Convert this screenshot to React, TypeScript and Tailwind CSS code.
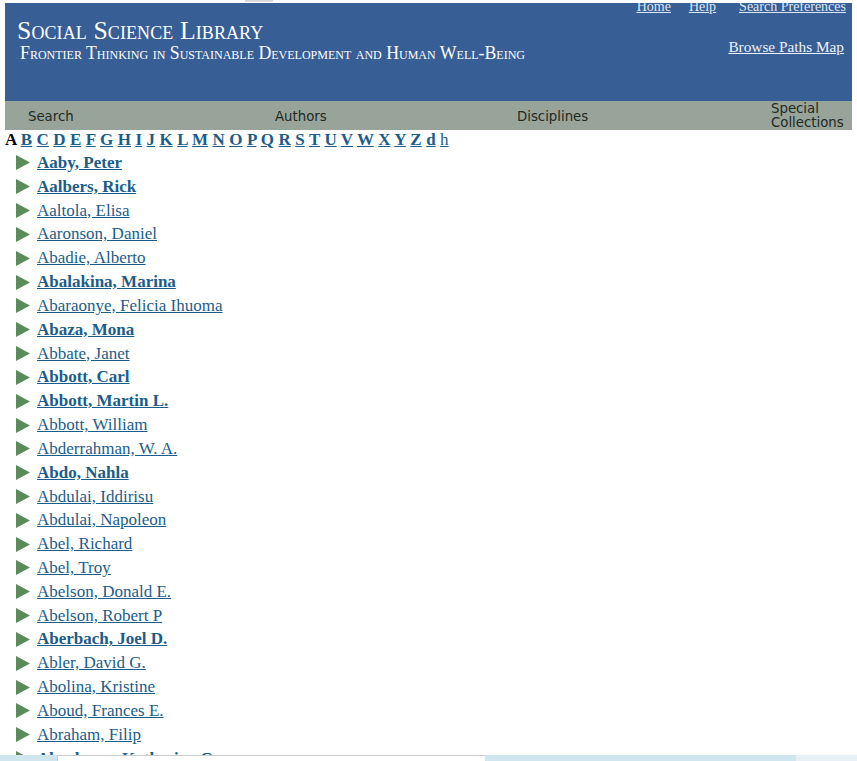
import React from 'react';

const letters = ['B', 'C', 'D', 'E', 'F', 'G', 'H', 'I', 'J', 'K', 'L', 'M', 'N', 'O', 'P', 'Q', 'R', 'S', 'T', 'U', 'V', 'W', 'X', 'Y', 'Z', 'd'];

const authors: Array<{ name: string; bold?: boolean }> = [
    { name: 'Aaby, Peter', bold: true },
    { name: 'Aalbers, Rick', bold: true },
    { name: 'Aaltola, Elisa' },
    { name: 'Aaronson, Daniel' },
    { name: 'Abadie, Alberto' },
    { name: 'Abalakina, Marina', bold: true },
    { name: 'Abaraonye, Felicia Ihuoma' },
    { name: 'Abaza, Mona', bold: true },
    { name: 'Abbate, Janet' },
    { name: 'Abbott, Carl', bold: true },
    { name: 'Abbott, Martin L.', bold: true },
    { name: 'Abbott, William' },
    { name: 'Abderrahman, W. A.' },
    { name: 'Abdo, Nahla', bold: true },
    { name: 'Abdulai, Iddirisu' },
    { name: 'Abdulai, Napoleon' },
    { name: 'Abel, Richard' },
    { name: 'Abel, Troy' },
    { name: 'Abelson, Donald E.' },
    { name: 'Abelson, Robert P' },
    { name: 'Aberbach, Joel D.', bold: true },
    { name: 'Abler, David G.' },
    { name: 'Abolina, Kristine' },
    { name: 'Aboud, Frances E.' },
    { name: 'Abraham, Filip' },
    { name: 'Abrahams, Katherine G.', bold: true },
];

function Arrow() {
    return (
        <svg width="15" height="15" viewBox="0 0 15 15" className="shrink-0">
            <polygon points="0,0 14,7.5 0,15" fill="#5a8b5a" />
        </svg>
    );
}

export default function App() {
    return (
        <div className="min-h-screen bg-white font-['Liberation_Serif',serif] text-black">
            {/* top strip */}
            <div className="h-[3px] pl-[245px]">
                <div className="h-[2px] w-[28px] bg-[#d9d9d9]" />
            </div>

            {/* header */}
            <div className="mx-[5px] flex h-[98px] overflow-hidden bg-[#375e95] text-white">
                <div className="flex-1 pl-[12px] pt-[13px] [font-variant:small-caps]">
                    <div className="text-[25.7px] leading-[30px] tracking-[0.1px]">Social Science Library</div>
                    <div className="-mt-[3px] pl-[3px] text-[17.8px] leading-[20px]">Frontier Thinking in Sustainable Development and Human Well-Being</div>
                </div>
                <div className="flex flex-col items-end pr-[6px]">
                    <div className="-mt-[5px] flex text-[14px] leading-[18px] text-[#dde7f4] underline">
                        <a className="mr-[18px]">Home</a>
                        <a className="mr-[23px]">Help</a>
                        <a>Search Preferences</a>
                    </div>
                    <a className="mr-[2px] mt-[22px] text-[15.3px] leading-[18px] text-[#eef3fa] underline">Browse Paths Map</a>
                </div>
            </div>

            {/* nav */}
            <div className="mx-[5px] flex h-[29px] items-center bg-[#98a49a] font-['DejaVu_Sans',sans-serif] text-[13.3px] leading-[14px] text-[#1f2a22]">
                <div className="w-[270px] pl-[23px] pt-[2px]">Search</div>
                <div className="w-[242px] pt-[2px]">Authors</div>
                <div className="w-[254px] pt-[2px]">Disciplines</div>
                <div className="pt-[1px]">Special<br />Collections</div>
            </div>

            {/* letters */}
            <div className="pl-[5px] text-[17px] font-bold leading-[20px] [word-spacing:0.2px]">
                <span>A</span>
                {letters.map((l) => (
                    <React.Fragment key={l}>
                        {' '}
                        <a className="text-[#1b5d8a] underline">{l}</a>
                    </React.Fragment>
                ))}{' '}
                <a className="font-normal text-[#1b5d8a] underline">h</a>
            </div>

            {/* author list */}
            <ul className="mt-[1px] pl-[16px]">
                {authors.map((a) => (
                    <li key={a.name} className="flex h-[23.83px] items-center gap-[6px]">
                        <Arrow />
                        <a className={`text-[17px] leading-[20px] text-[#1b5d8a] underline ${a.bold ? 'font-bold' : ''}`}>{a.name}</a>
                    </li>
                ))}
            </ul>

            {/* bottom overlay bar */}
            <div className="fixed bottom-0 left-0 right-0 flex h-[6px]">
                <div className="flex flex-1 bg-[#cfe6ee]">
                    <div className="ml-[57px] w-[428px] border-t border-l border-[#c9cccf] bg-white" />
                    <div className="flex-1" />
                </div>
                <div className="w-[61px] bg-[#e7f1f5]" />
            </div>
        </div>
    );
}
